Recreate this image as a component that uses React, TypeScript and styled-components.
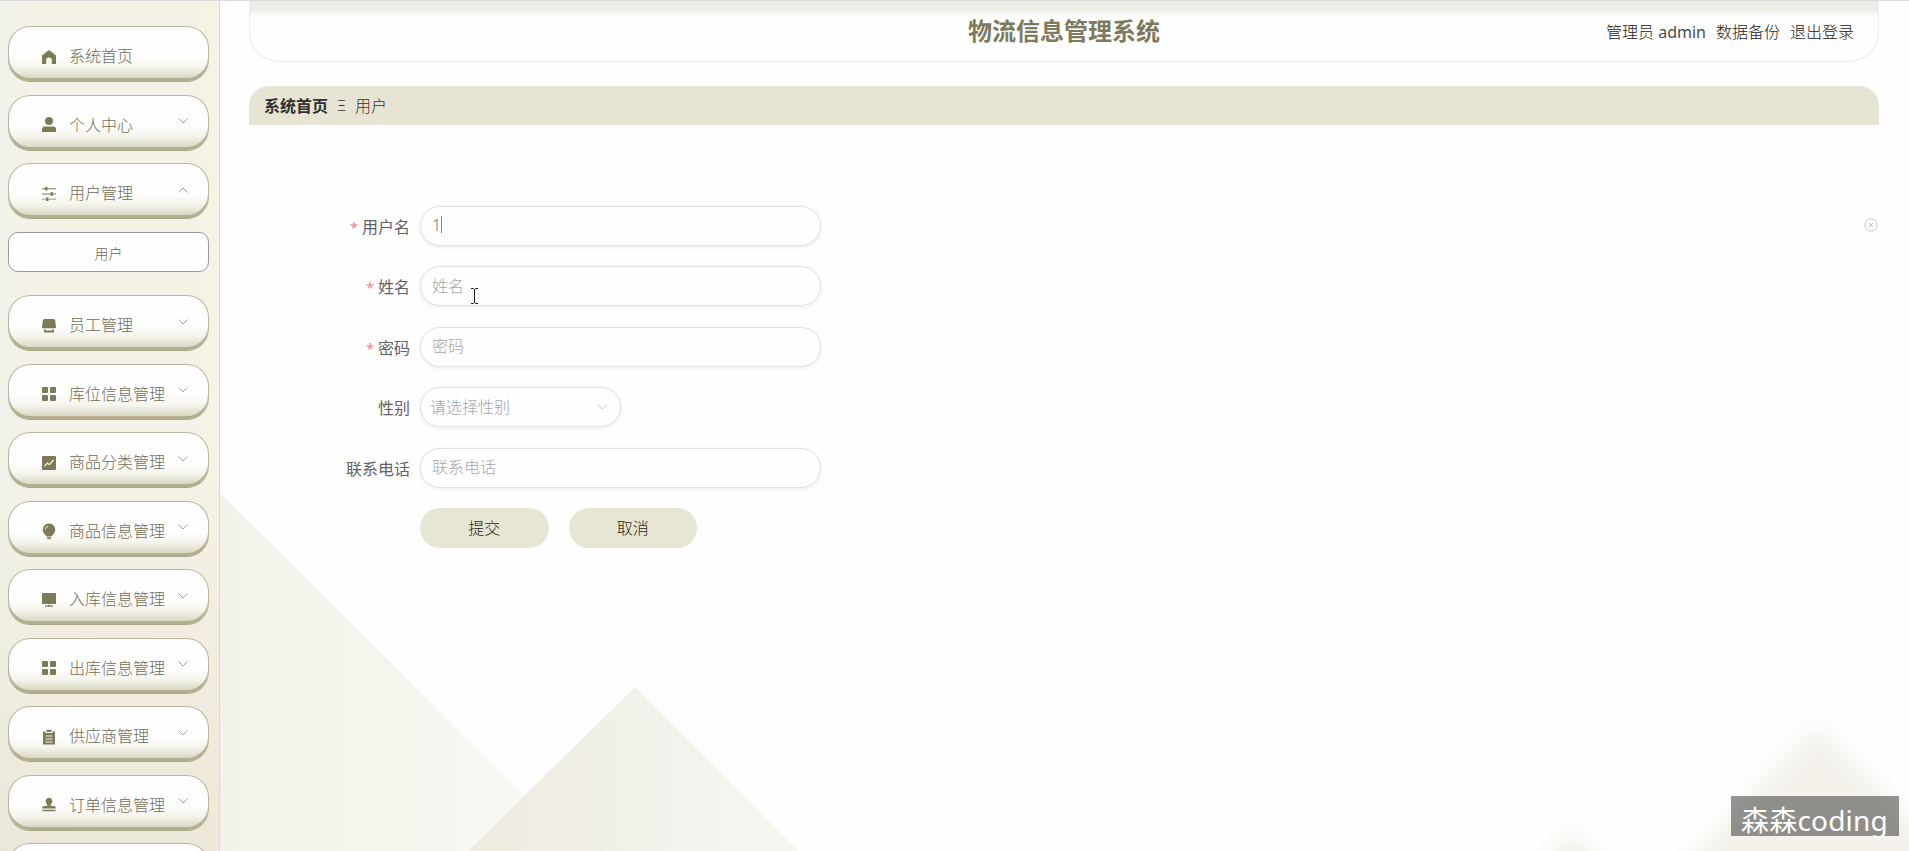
import React from 'react';
import styled, { createGlobalStyle, css } from 'styled-components';

const Global = createGlobalStyle`
  * { box-sizing: border-box; }
  body {
    margin: 0;
    overflow: hidden;
    background: #fefefe;
    font-family: 'Noto Sans', 'Noto Sans CJK SC', sans-serif;
    font-size: 16px;
  }
`;

const Page = styled.div`
  position: relative;
  display: flex;
  height: 851px;
  overflow: hidden;
  border-top: 1px solid #dcdbd9;
`;

const Backdrop = styled.svg`
  position: absolute;
  left: 0;
  top: -1px;
`;

const Sidebar = styled.nav`
  position: relative;
  flex: none;
  width: 220px;
  padding: 25px 10px 0 8px;
  border-right: 1px solid #dcd9d3;
  background: linear-gradient(90deg, #f1f2ea 0, #f4f2e8 16px, #f4f1e7 190px, #f7f2e4 100%);
  &::after {
    content: '';
    position: absolute;
    inset: 0;
    background: linear-gradient(180deg, transparent 55%, rgba(205, 195, 165, 0.22));
    z-index: 0;
  }
`;

const MenuItem = styled.div`
  position: relative;
  z-index: 1;
  display: flex;
  align-items: center;
  height: 56px;
  margin-bottom: 12.5px;
  padding: 4px 21px 0 33px;
  border: 1px solid #b9b6a2;
  border-bottom-color: #aaa686;
  border-radius: 22px;
  background: linear-gradient(#fefefe 55%, #f5f4ec 75%, #d9d7c2 95%);
  box-shadow: inset 0 -3px 0 #b3ae90;
  color: #716d58;
`;

const MenuIcon = styled.svg`
  flex: none;
  width: 14px;
  height: 14px;
  margin: 1px 13px 0 0;
  fill: #7d7a58;
  overflow: visible;
`;

const MenuLabel = styled.span`
  flex: none;
  line-height: 24px;
  font-weight: 300;
  white-space: nowrap;
`;

const Chevron = styled.svg<{ $up?: boolean }>`
  flex: none;
  width: 10px;
  height: 6px;
  margin: -7px 0 0 auto;
  fill: none;
  stroke: #a3a4a6;
  stroke-width: 1;
  ${(p) => p.$up && css`transform: rotate(180deg);`}
`;

const MenuChevron = styled(Chevron)`
  margin-right: -1px;
`;

const SubItem = styled.div`
  position: relative;
  z-index: 1;
  display: flex;
  align-items: center;
  justify-content: center;
  height: 40px;
  margin: 0 0 23.5px;
  padding-top: 2px;
  border: 1px solid #9b9a97;
  border-bottom-width: 1.5px;
  border-radius: 10px;
  background: #fefefe;
  color: #6c6853;
  font-size: 14px;
  font-weight: 300;
`;

const Main = styled.main`
  position: relative;
  flex: 1;
  min-width: 0;
  padding: 0 30px 0 29px;
`;

const Header = styled.header`
  display: grid;
  grid-template-columns: 1fr auto 1fr;
  align-items: center;
  height: 61px;
  padding: 0 24px 0 24px;
  border: 1px solid #ececef;
  border-top: 0;
  border-radius: 0 0 30px 30px;
  background: linear-gradient(#ecebe3 0, #eeece6 8px, #fefefe 16px);
`;

const Title = styled.h1`
  grid-column: 2;
  margin: 0;
  color: #7f7a5d;
  font-size: 24px;
  font-weight: 700;
  line-height: 60px;
`;

const Account = styled.div`
  display: flex;
  justify-content: flex-end;
  gap: 10px;
  padding-bottom: 1px;
  color: #222;
  font-weight: 300;
  font-size: 16px;
`;

const UserName = styled.span`
  color: #4a4a4a;
  font-weight: 400;
`;

const Breadcrumb = styled.div`
  display: flex;
  align-items: center;
  gap: 9px;
  height: 39px;
  margin-top: 24px;
  padding: 0 0 1px 15px;
  border-radius: 20px 20px 0 0;
  background: linear-gradient(#e4e6d3, #e7e4d4 35%);
  color: #33322e;
  font-weight: 300;
`;

const Current = styled.strong`
  color: #303030;
  font-weight: 700;
`;

const Divider = styled.span`
  width: 9px;
  font-size: 15px;
  text-align: center;
`;

const Form = styled.form`
  position: relative;
  padding: 81px 0 0 21px;
`;

const Field = styled.div`
  display: flex;
  align-items: center;
  height: 40px;
  margin-bottom: 20.4px;
`;

const Label = styled.label<{ $required?: boolean }>`
  width: 140px;
  margin-right: 10px;
  color: #606266;
  text-align: right;
  ${(p) => p.$required && css`
    &::before { content: '*'; margin-right: 4px; color: #f28091; font-size: 14px; }
  `}
`;

const Control = styled.div<{ $select?: boolean }>`
  display: flex;
  align-items: center;
  width: ${(p) => (p.$select ? 201 : 401)}px;
  height: 40px;
  padding: 0 12px 3px ${(p) => (p.$select ? 9 : 11)}px;
  border: 1px solid #e0e1e3;
  border-radius: 20px;
  background: #fefefe;
  box-shadow: 0 1px 4px rgba(0, 0, 0, 0.08);
  color: #a6a7ab;
  font-weight: 300;
`;

const Typed = styled.span`
  width: 10px;
  height: 17px;
  border-right: 1px solid #8a8a8a;
  color: #777;
  line-height: 18px;
`;

const SelectArrow = styled(Chevron)`
  width: 11px;
  margin-top: 3px;
  stroke: #c0c4cc;
`;

const Actions = styled.div`
  display: flex;
  gap: 20px;
  padding-left: 150px;
`;

const Button = styled.button`
  width: 128.500px;
  height: 40px;
  padding: 0 0 2px;
  border: 0;
  border-radius: 20px;
  background: #e7e5d4;
  color: #1f1d19;
  font: inherit;
  font-weight: 300;
`;

const ClearIcon = styled.svg`
  position: absolute;
  right: 1px;
  top: 93px;
`;

const Pointer = styled.svg`
  position: absolute;
  left: 470px;
  top: 286px;
`;

const Watermark = styled.div`
  position: absolute;
  right: 10px;
  bottom: 15px;
  width: 168px;
  height: 40px;
  padding: 4px 0 0 10px;
  background: rgba(0, 0, 0, 0.41);
  color: #fff;
  font-size: 28px;
  line-height: 40px;
  white-space: nowrap;
  letter-spacing: 0.2px;
`;

const icons: Record<string, React.ReactNode> = {
  home: <path d="M7 0 0 5.6V14h4.2V9.4Q4.2 7.6 7 7.6T9.8 9.4V14H14V5.6Z" />,
  user: <path d="M7-1a4 4 0 1 1 0 8 4 4 0 0 1 0-8M0 14v-2.600Q0 8.600 3 8.600h8q3 0 3 2.800V14Z" />,
  sliders: (
    <path d="M0 1.300h3V0h2.500v1.300H14v.9H5.500v1.300H3V2.200H0ZM0 6.500h8.500V5.200H11v1.300h3v.9h-3v1.300H8.500V7.400H0ZM0 11.700h4v-1.300h2.500v1.300H14v.9H6.500v1.300H4v-1.300H0Z" />
  ),
  shop: <path d="M2.500 0h9Q13 0 13.200 1.500L14 8q0 1.300-1.200 1.300H1.200Q0 9.300 0 8L.8 1.500Q1 0 2.500 0M2 10.300h1.500v1.200h7v-1.200H12V13.500H2Z" />,
  grid: (
    <>
      <rect width="6" height="6" rx="1" />
      <rect x="8" width="6" height="6" rx="1" />
      <rect y="8" width="6" height="6" rx="1" />
      <rect x="8" y="8" width="6" height="6" rx="1" />
    </>
  ),
  chart: (
    <>
      <rect width="14" height="14" rx="1" />
      <path d="m2.500 10 3-3 2 1.600 4-4.600" fill="none" stroke="#f4f3ea" strokeWidth="1.200" />
    </>
  ),
  bulb: (
    <>
      <path d="M7-.5a6.200 6.200 0 0 1 4.900 10L9.500 12.400h-5L2.100 9.500A6.200 6.200 0 0 1 7-.5M4.800 13.300h4.400L8.600 15H5.400Z" />
      <path d="M3.200 5.400Q3.600 2.800 6.200 2.200" fill="none" stroke="#f4f3ea" />
    </>
  ),
  monitor: <path d="M.5 0h13q.5 0 .5.500v10q0 .500-.500.500H.5Q0 11 0 10.500V.5Q0 0 .5 0M6 11.700h2v.8h3v1.200H3v-1.200h3Z" />,
  clipboard: (
    <>
      <path d="M1 1.500h2.500V3h7V1.500H13V14.500H1ZM4.500-.3h5V2h-5Z" />
      <path d="M3.500 6h7M3.500 9h7M3.500 12h7" stroke="#f4f3ea" />
    </>
  ),
  stamp: <path d="M7-.2a3.400 3.400 0 0 1 2.300 5.900L8.600 8H12q2 0 2 2.600H0Q0 8 2 8h3.400L4.700 5.700A3.400 3.400 0 0 1 7-.2M.5 11.800h13v1.500H.5Z" />,
};

type Entry = { icon: string; label: string; leaf?: boolean; child?: string };

const menu: Entry[] = [
  { icon: 'home', label: '系统首页', leaf: true },
  { icon: 'user', label: '个人中心' },
  { icon: 'sliders', label: '用户管理', child: '用户' },
  { icon: 'shop', label: '员工管理' },
  { icon: 'grid', label: '库位信息管理' },
  { icon: 'chart', label: '商品分类管理' },
  { icon: 'bulb', label: '商品信息管理' },
  { icon: 'monitor', label: '入库信息管理' },
  { icon: 'grid', label: '出库信息管理' },
  { icon: 'clipboard', label: '供应商管理' },
  { icon: 'stamp', label: '订单信息管理' },
  { icon: 'grid', label: '' },
];

const arrow = <path d="m.5.5 4.500 4.500L9.500.5" />;

function Mountains() {
  return (
    <Backdrop width="1909" height="851" viewBox="0 0 1909 851">
      <defs>
        <linearGradient id="left">
          <stop offset="0" stopColor="#f2f2eb" />
          <stop offset=".5" stopColor="#f5f5ee" />
          <stop offset="1" stopColor="#fbfaf7" />
        </linearGradient>
        <linearGradient id="middle">
          <stop offset="0" stopColor="#eeeadf" />
          <stop offset=".5" stopColor="#f1f1ea" />
          <stop offset="1" stopColor="#f7f7f1" />
        </linearGradient>
        <filter id="soft" x="-20%" y="-30%" width="140%" height="160%">
          <feGaussianBlur stdDeviation="10" />
        </filter>
      </defs>
      <path d="M220 493 581 851H220Z" fill="url(#left)" />
      <path d="M635 687 799 851H468Z" fill="url(#middle)" />
      <g filter="url(#soft)">
        <path d="M1818 726 1950 860V900H1650Z" fill="#f3f1ea" />
        <path d="M1573 828 1620 880H1530Z" fill="#f3f3ec" />
      </g>
    </Backdrop>
  );
}

export default function App() {
  return (
    <>
      <Global />
      <Page>
        <Mountains />
        <Sidebar>
          {menu.map((m, i) => (
            <React.Fragment key={i}>
              <MenuItem>
                <MenuIcon viewBox="0 0 14 14">{icons[m.icon]}</MenuIcon>
                <MenuLabel>{m.label}</MenuLabel>
                {!m.leaf && <MenuChevron viewBox="0 0 10 6" $up={!!m.child}>{arrow}</MenuChevron>}
              </MenuItem>
              {m.child && <SubItem>{m.child}</SubItem>}
            </React.Fragment>
          ))}
        </Sidebar>
        <Main>
          <Header>
            <Title>物流信息管理系统</Title>
            <Account>
              <span>管理员 <UserName>admin</UserName></span>
              <span>数据备份</span>
              <span>退出登录</span>
            </Account>
          </Header>
          <Breadcrumb>
            <Current>系统首页</Current>
            <Divider>Ξ</Divider>
            <span>用户</span>
          </Breadcrumb>
          <Form>
            <Field>
              <Label $required>用户名</Label>
              <Control><Typed>1</Typed></Control>
            </Field>
            <Field>
              <Label $required>姓名</Label>
              <Control>姓名</Control>
            </Field>
            <Field>
              <Label $required>密码</Label>
              <Control>密码</Control>
            </Field>
            <Field>
              <Label>性别</Label>
              <Control $select>
                请选择性别
                <SelectArrow viewBox="0 0 10 6">{arrow}</SelectArrow>
              </Control>
            </Field>
            <Field>
              <Label>联系电话</Label>
              <Control>联系电话</Control>
            </Field>
            <Actions>
              <Button type="button">提交</Button>
              <Button type="button">取消</Button>
            </Actions>
            <ClearIcon width="14" height="14" viewBox="0 0 14 14" fill="none" stroke="#c5c6ca">
              <circle cx="7" cy="7" r="6" />
              <path d="m5 5 4 4m0-4L5 9" />
            </ClearIcon>
          </Form>
        </Main>
        <Pointer width="9" height="18" viewBox="0 0 9 18" fill="none" stroke="#222">
          <path d="M1 1.500h2.500l1 1 1-1H8M4.500 2v14M1 16.500h2.500l1-1 1 1H8" />
        </Pointer>
        <Watermark>森森coding</Watermark>
      </Page>
    </>
  );
}
